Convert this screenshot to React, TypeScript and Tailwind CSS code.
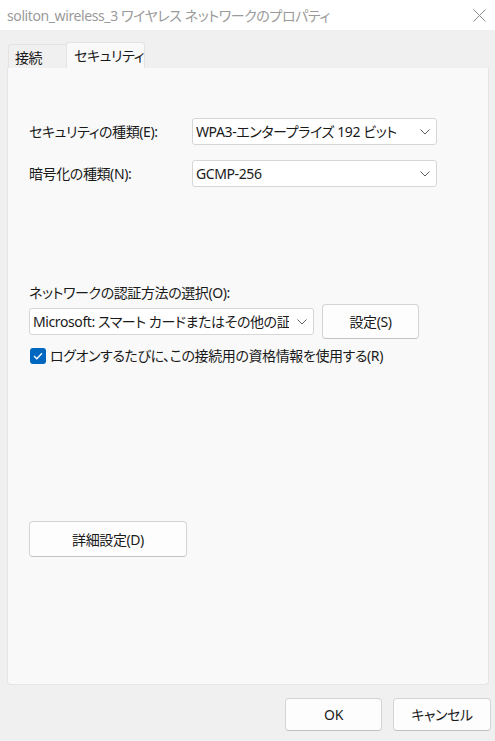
import React from "react";

const FONT = "font-['Noto_Sans','Noto_Sans_CJK_JP',sans-serif] [font-feature-settings:'palt'] tracking-[-0.4px]";

function Chevron() {
  return (
    <svg width="10" height="6" viewBox="0 0 10 6" className="shrink-0">
      <path d="M0.5 0.5 L5 5 L9.5 0.5" fill="none" stroke="#5f5f5f" strokeWidth="1" />
    </svg>
  );
}

function Select({ value, className }: { value: string; className: string }) {
  return (
    <div
      className={`flex h-[27px] items-center gap-2 rounded-[3px] border border-[#d6d6d6] bg-white pl-[3px] pr-[6px] text-[14px] text-[#1a1a1a] ${className}`}
    >
      <span className="min-w-0 flex-1 overflow-hidden whitespace-nowrap">{value}</span>
      <Chevron />
    </div>
  );
}

function Button({ label, className }: { label: string; className: string }) {
  return (
    <div
      className={`flex items-center justify-center rounded-[4px] border border-[#d4d4d4] border-b-[#c2c2c2] bg-[#fdfdfd] text-[14px] text-[#1a1a1a] ${className}`}
    >
      {label}
    </div>
  );
}

export default function App() {
  return (
    <div className={`flex h-[741px] w-[495px] flex-col bg-[#f0f0f0] ${FONT}`}>
      <div className="flex h-[30px] items-center justify-between bg-white pl-[7px] pr-[9px]">
        <span className="whitespace-nowrap text-[14px] text-[#9a9a9a]">soliton_wireless_3 ワイヤレス ネットワークのプロパティ</span>
        <svg width="13" height="13" viewBox="0 0 13 13" className="shrink-0">
          <path d="M0.5 0.5 L12.5 12.5 M12.5 0.5 L0.5 12.5" stroke="#8a8a8a" strokeWidth="1" />
        </svg>
      </div>

      <div className="ml-[8px] mt-[12px] flex h-[26px] items-end">
        <div className="flex h-[24px] w-[58px] items-center whitespace-nowrap rounded-tl-[3px] border border-b-0 border-r-0 border-[#e3e3e3] bg-[#f0f0f0] pl-[6px] pt-[2px] text-[14px] text-[#1a1a1a]">
          接続
        </div>
        <div className="flex h-[26px] w-[79px] items-center whitespace-nowrap rounded-t-[3px] border border-b-0 border-[#e3e3e3] bg-[#f9f9f9] pl-[7px] text-[14px] text-[#1a1a1a]">
          セキュリティ
        </div>
      </div>

      <div className="ml-[7px] flex h-[617px] w-[482px] flex-col rounded-b-[4px] border border-t-0 border-[#e5e5e5] bg-[#f9f9f9] pl-[21px] text-[14px] text-[#1a1a1a]">
        <div className="mt-[50px] flex items-center">
          <span className="w-[163px] whitespace-nowrap">セキュリティの種類(E):</span>
          <Select value="WPA3-エンタープライズ 192 ビット" className="w-[245px]" />
        </div>
        <div className="mt-[15px] flex items-center">
          <span className="w-[163px] whitespace-nowrap">暗号化の種類(N):</span>
          <Select value="GCMP-256" className="w-[245px]" />
        </div>

        <div className="mt-[96px] whitespace-nowrap leading-[20px]">ネットワークの認証方法の選択(O):</div>
        <div className="mt-[1px] flex items-center">
          <Select value="Microsoft: スマート カードまたはその他の証明書" className="w-[285px]" />
          <Button label="設定(S)" className="ml-[8px] h-[35px] w-[97px]" />
        </div>
        <div className="mt-[6px] flex items-center">
          <div className="ml-[1px] flex h-[16px] w-[16px] shrink-0 items-center justify-center rounded-[3px] bg-[#0067c0]">
            <svg width="10" height="8" viewBox="0 0 10 8">
              <path d="M1 4 L3.8 6.8 L9 1.2" fill="none" stroke="white" strokeWidth="1.3" />
            </svg>
          </div>
          <span className="ml-[4px] whitespace-nowrap">ログオンするたびに、この接続用の資格情報を使用する(R)</span>
        </div>

        <Button label="詳細設定(D)" className="mt-[155px] h-[36px] w-[158px]" />
      </div>

      <div className="mt-[13px] flex justify-end gap-[11px] pr-[4px]">
        <Button label="OK" className="h-[33px] w-[97px]" />
        <Button label="キャンセル" className="h-[33px] w-[98px]" />
      </div>
    </div>
  );
}
